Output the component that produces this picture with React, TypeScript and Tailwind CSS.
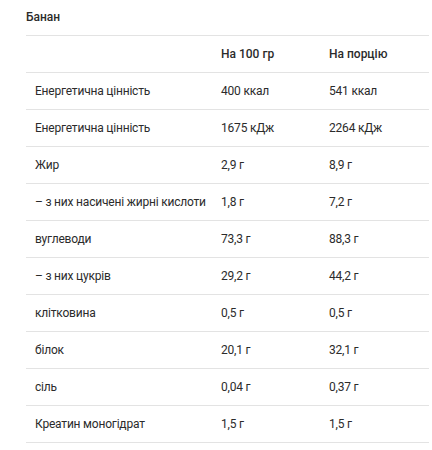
const ROWS: [string, string, string][] = [
  ['Енергетична цінність', '400 ккал', '541 ккал'],
  ['Енергетична цінність', '1675 кДж', '2264 кДж'],
  ['Жир', '2,9 г', '8,9 г'],
  ['– з них насичені жирні кислоти', '1,8 г', '7,2 г'],
  ['вуглеводи', '73,3 г', '88,3 г'],
  ['– з них цукрів', '29,2 г', '44,2 г'],
  ['клітковина', '0,5 г', '0,5 г'],
  ['білок', '20,1 г', '32,1 г'],
  ['сіль', '0,04 г', '0,37 г'],
  ['Креатин моногідрат', '1,5 г', '1,5 г'],
]

export default function App() {
  return (
    <div className="w-[432px] h-[450px] bg-white pl-[26px] text-[12px] text-[#2b2b2b]" style={{ fontFamily: 'Roboto, "Noto Sans", sans-serif' }}>
      <div className="h-[35px] pt-[8px] font-medium">Банан</div>
      <div className="w-[403px] border-t border-[#e3e3e3]">
        <div className="grid grid-cols-[186px_108px_1fr] h-[37px] items-center border-b border-[#e3e3e3] font-medium">
          <div className="px-[9px]"></div>
          <div className="px-[9px]">На 100 гр</div>
          <div className="px-[9px]">На порцію</div>
        </div>
        {ROWS.map((r, i) => (
          <div key={i} className="grid grid-cols-[186px_108px_1fr] h-[37px] items-center border-b border-[#e3e3e3] tracking-[-0.2px]">
            <div className="px-[9px] whitespace-nowrap">{r[0]}</div>
            <div className="px-[9px]">{r[1]}</div>
            <div className="px-[9px]">{r[2]}</div>
          </div>
        ))}
      </div>
    </div>
  )
}
